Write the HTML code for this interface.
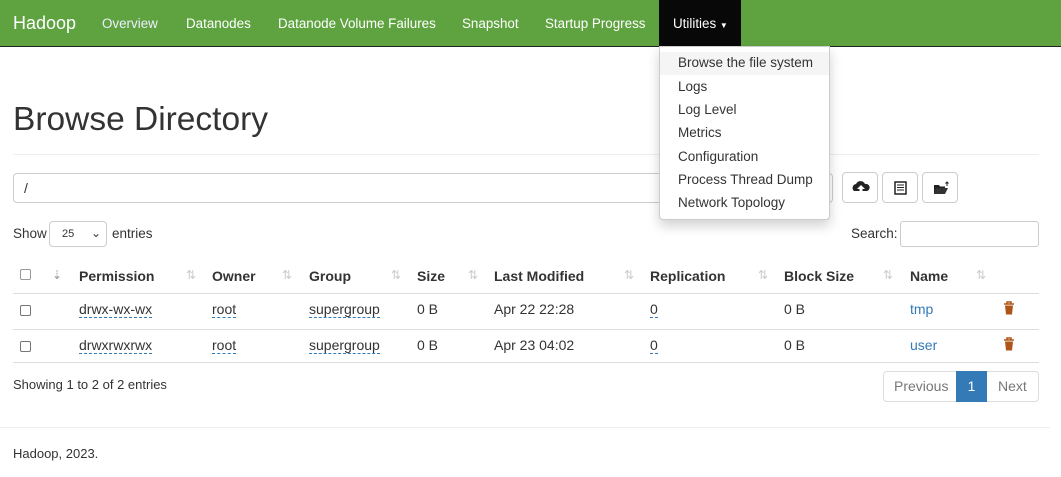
<!DOCTYPE html><html><head><style>
*{box-sizing:border-box}body{margin:0;width:1061px;height:477px;position:relative;font-family:"Liberation Sans",sans-serif;font-size:14px;color:#333;background:#fff;overflow:hidden}
.a{position:absolute;white-space:nowrap}
.nav{position:absolute;left:0;top:0;width:1061px;height:47px;background:#5fa341;border-bottom:1px solid #222}
.nav span{position:absolute;top:16px;color:#fff;font-size:13.4px}
.dd{position:absolute;left:659px;top:46px;width:171px;height:174px;background:#fff;border:1px solid #ccc;border-radius:0 0 4px 4px;box-shadow:0 6px 12px rgba(0,0,0,.18)}
.dd div{position:absolute;left:18px;font-size:13.5px;color:#333}
.btn{position:absolute;top:172px;width:36px;height:31px;border:1px solid #ccc;border-radius:4px;background:#fff}
.th{font-weight:bold;top:268px}
.si{color:#ccc;font-size:12px;top:268px}
.ln{position:absolute;left:13px;width:1026px;height:1px;background:#ddd}
.u{border-bottom:1px dashed #337ab7}
.cb{position:absolute;left:20px;width:11px;height:11px;border:1px solid #767676;border-radius:2px}
.bl{color:#337ab7}
</style></head><body>
<div class="nav">
<span style="left:13px;top:13px;font-size:18px">Hadoop</span>
<span style="left:102px;color:#eef">Overview</span>
<span style="left:186px">Datanodes</span>
<span style="left:278px">Datanode Volume Failures</span>
<span style="left:462px">Snapshot</span>
<span style="left:545px">Startup Progress</span>
<div style="position:absolute;left:659px;top:0;width:82px;height:46px;background:#080808"></div>
<span style="left:673px">Utilities <small style="font-size:8px">▼</small></span>
</div>
<div class="a" style="left:13px;top:101px;font-size:33.5px;color:#333">Browse Directory</div>
<div class="ln" style="top:154px;background:#eee"></div>
<div style="position:absolute;left:13px;top:173px;width:820px;height:30px;border:1px solid #ccc;border-radius:4px"></div>
<div class="a" style="left:24px;top:180px">/</div>
<div class="btn" style="left:842px"><svg width="36" height="31" viewBox="0 0 36 31"><path d="M11 18a4 4 0 0 1 2-7 5 5 0 0 1 9 0 3.5 3.5 0 0 1 2 7z" fill="#222"/><path d="M18 12l-4 4h2.5v5h3v-5H22z" fill="#fff"/></svg></div>
<div class="btn" style="left:882px"><svg width="36" height="31"><rect x="12" y="9" width="11" height="12" fill="none" stroke="#222" stroke-width="1.5"/><path d="M14 12h7M14 14.5h7M14 17h7" stroke="#222"/></svg></div>
<div class="btn" style="left:922px"><svg width="36" height="31"><path d="M11 12h5l1 1.5h5v7H11z" fill="#222"/><path d="M13 15h12l-3 6H11z" fill="#333"/><path d="M24 9v4M22.5 10.5L24 9l1.5 1.5" stroke="#222" fill="none"/></svg></div>
<div class="a" style="left:13px;top:226px;font-size:13.5px">Show</div>
<div style="position:absolute;left:49px;top:221px;width:58px;height:26px;border:1px solid #ccc;border-radius:4px;font-size:11px;padding:6px 0 0 12px">25 <span style="position:absolute;right:5px;top:4px;font-size:12px">⌄</span></div>
<div class="a" style="left:112px;top:226px;font-size:13.5px">entries</div>
<div class="a" style="left:851px;top:226px;font-size:13.5px">Search:</div>
<div style="position:absolute;left:900px;top:221px;width:139px;height:26px;border:1px solid #ccc;border-radius:3px"></div>
<div class="cb" style="top:269px;border-color:#999"></div>
<div class="a si" style="left:52px;color:#999">⇣</div>
<div class="a th" style="left:79px">Permission</div><div class="a si" style="left:186px">⇅</div>
<div class="a th" style="left:212px">Owner</div><div class="a si" style="left:282px">⇅</div>
<div class="a th" style="left:309px">Group</div><div class="a si" style="left:391px">⇅</div>
<div class="a th" style="left:417px">Size</div><div class="a si" style="left:468px">⇅</div>
<div class="a th" style="left:494px">Last Modified</div><div class="a si" style="left:624px">⇅</div>
<div class="a th" style="left:650px">Replication</div><div class="a si" style="left:758px">⇅</div>
<div class="a th" style="left:784px">Block Size</div><div class="a si" style="left:883px">⇅</div>
<div class="a th" style="left:910px">Name</div><div class="a si" style="left:976px">⇅</div>
<div class="ln" style="top:293px"></div>
<div class="cb" style="top:305px"></div>
<div class="a" style="left:79px;top:301px"><span class="u">drwx-wx-wx</span></div>
<div class="a" style="left:212px;top:301px"><span class="u">root</span></div>
<div class="a" style="left:309px;top:301px"><span class="u">supergroup</span></div>
<div class="a" style="left:417px;top:301px">0 B</div>
<div class="a" style="left:494px;top:301px">Apr 22 22:28</div>
<div class="a" style="left:650px;top:301px"><span class="u">0</span></div>
<div class="a" style="left:784px;top:301px">0 B</div>
<div class="a bl" style="left:910px;top:301px">tmp</div>
<svg class="a" style="left:1003px;top:301px" width="12" height="14"><path d="M1 3h10M4 3V1h4v2" stroke="#b0551a" fill="none" stroke-width="1.5"/><path d="M2 4.5h8l-1 9H3z" fill="#b0551a"/></svg>
<div class="ln" style="top:329px"></div>
<div class="cb" style="top:341px"></div>
<div class="a" style="left:79px;top:337px"><span class="u">drwxrwxrwx</span></div>
<div class="a" style="left:212px;top:337px"><span class="u">root</span></div>
<div class="a" style="left:309px;top:337px"><span class="u">supergroup</span></div>
<div class="a" style="left:417px;top:337px">0 B</div>
<div class="a" style="left:494px;top:337px">Apr 23 04:02</div>
<div class="a" style="left:650px;top:337px"><span class="u">0</span></div>
<div class="a" style="left:784px;top:337px">0 B</div>
<div class="a bl" style="left:910px;top:337px">user</div>
<svg class="a" style="left:1003px;top:337px" width="12" height="14"><path d="M1 3h10M4 3V1h4v2" stroke="#b0551a" fill="none" stroke-width="1.5"/><path d="M2 4.5h8l-1 9H3z" fill="#b0551a"/></svg>
<div class="ln" style="top:362px"></div>
<div class="a" style="left:13px;top:377px;font-size:13px">Showing 1 to 2 of 2 entries</div>
<div style="position:absolute;left:883px;top:371px;width:156px;height:31px;border:1px solid #ddd;border-radius:4px"></div>
<div class="a" style="left:894px;top:378px;color:#777">Previous</div>
<div style="position:absolute;left:956px;top:371px;width:31px;height:31px;background:#337ab7;color:#fff;text-align:center;padding-top:7px">1</div>
<div class="a" style="left:998px;top:378px;color:#777">Next</div>
<div class="ln" style="top:427px;left:0;width:1050px;background:#eee"></div>
<div class="a" style="left:13px;top:446px;font-size:13px">Hadoop, 2023.</div>
<div class="dd">
<div style="left:0;top:5px;width:169px;height:23px;background:#f5f5f5"></div>
<div style="top:8px">Browse the file system</div>
<div style="top:32px">Logs</div>
<div style="top:55px">Log Level</div>
<div style="top:78px">Metrics</div>
<div style="top:102px">Configuration</div>
<div style="top:125px">Process Thread Dump</div>
<div style="top:148px">Network Topology</div>
</div>
</body></html>
